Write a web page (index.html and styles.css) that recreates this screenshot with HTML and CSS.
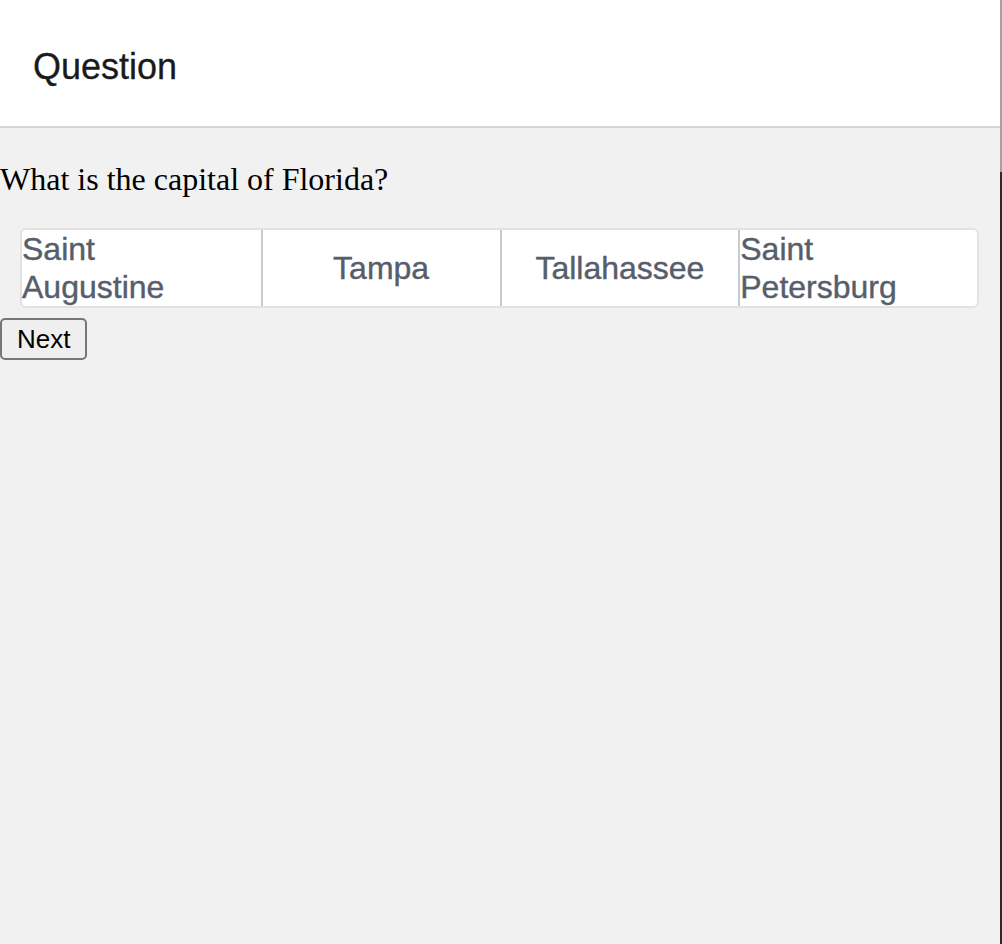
FILE: index.html
```html
<!DOCTYPE html>
<html lang="en">
<head>
<meta charset="utf-8">
<title>Question</title>
<link rel="stylesheet" href="styles.css">
</head>
<body>
<div class="page">
  <main class="main">
    <header class="header">
      <h1 class="title">Question</h1>
    </header>
    <p class="prompt">What is the capital of Florida?</p>
    <div class="options">
      <div class="option"><span class="label">Saint Augustine</span></div>
      <div class="option"><span class="label">Tampa</span></div>
      <div class="option"><span class="label">Tallahassee</span></div>
      <div class="option"><span class="label">Saint Petersburg</span></div>
    </div>
    <button class="next" type="button">Next</button>
  </main>
  <div class="edge"></div>
</div>
</body>
</html>
```

FILE: styles.css
```css
html, body {
  margin: 0;
  padding: 0;
}

body {
  background: #f1f1f1;
}

.page {
  display: flex;
  width: 1002px;
  min-height: 944px;
}

.main {
  width: 1000px;
  background: #f1f1f1;
}

.edge {
  width: 2px;
  background: linear-gradient(#a3a3a3 0, #a3a3a3 172px, #2b2b2b 172px, #2b2b2b 100%);
}

.header {
  background: #ffffff;
  height: 126px;
  border-bottom: 2px solid #d6d6d6;
  box-sizing: content-box;
  padding: 0 33px;
  display: flex;
  align-items: flex-start;
}

.title {
  margin: 46px 0 0;
  font-family: "Liberation Sans", Arial, sans-serif;
  font-size: 36px;
  font-weight: 400;
  color: #1a1a1a;
  -webkit-text-stroke: 0.3px #1a1a1a;
}

.prompt {
  margin: 33px 0 30px;
  font-family: "Liberation Serif", "Times New Roman", serif;
  font-size: 32px;
  color: #000000;
}

.options {
  margin-left: 20px;
  width: 959px;
  box-sizing: border-box;
  display: grid;
  grid-template-columns: repeat(4, 1fr);
  background: #ffffff;
  border: 2px solid #e2e2e2;
  border-radius: 6px;
}

.option {
  display: flex;
  align-items: center;
  justify-content: center;
  min-height: 76px;
  font-family: "Liberation Sans", Arial, sans-serif;
  font-size: 32px;
  line-height: 38px;
  color: #565e6b;
  -webkit-text-stroke: 0.4px #565e6b;
}

.option + .option {
  border-left: 2px solid #c5cbd3;
}

.label {
  word-spacing: 20px;
}

.next {
  margin-top: 10px;
  display: block;
  font-family: "Liberation Sans", Arial, sans-serif;
  font-size: 26px;
  line-height: 30px;
  color: #000000;
  background: #efefef;
  border: 2px solid #767676;
  border-radius: 5px;
  padding: 4px 15px;
  margin-left: 0;
}
```
